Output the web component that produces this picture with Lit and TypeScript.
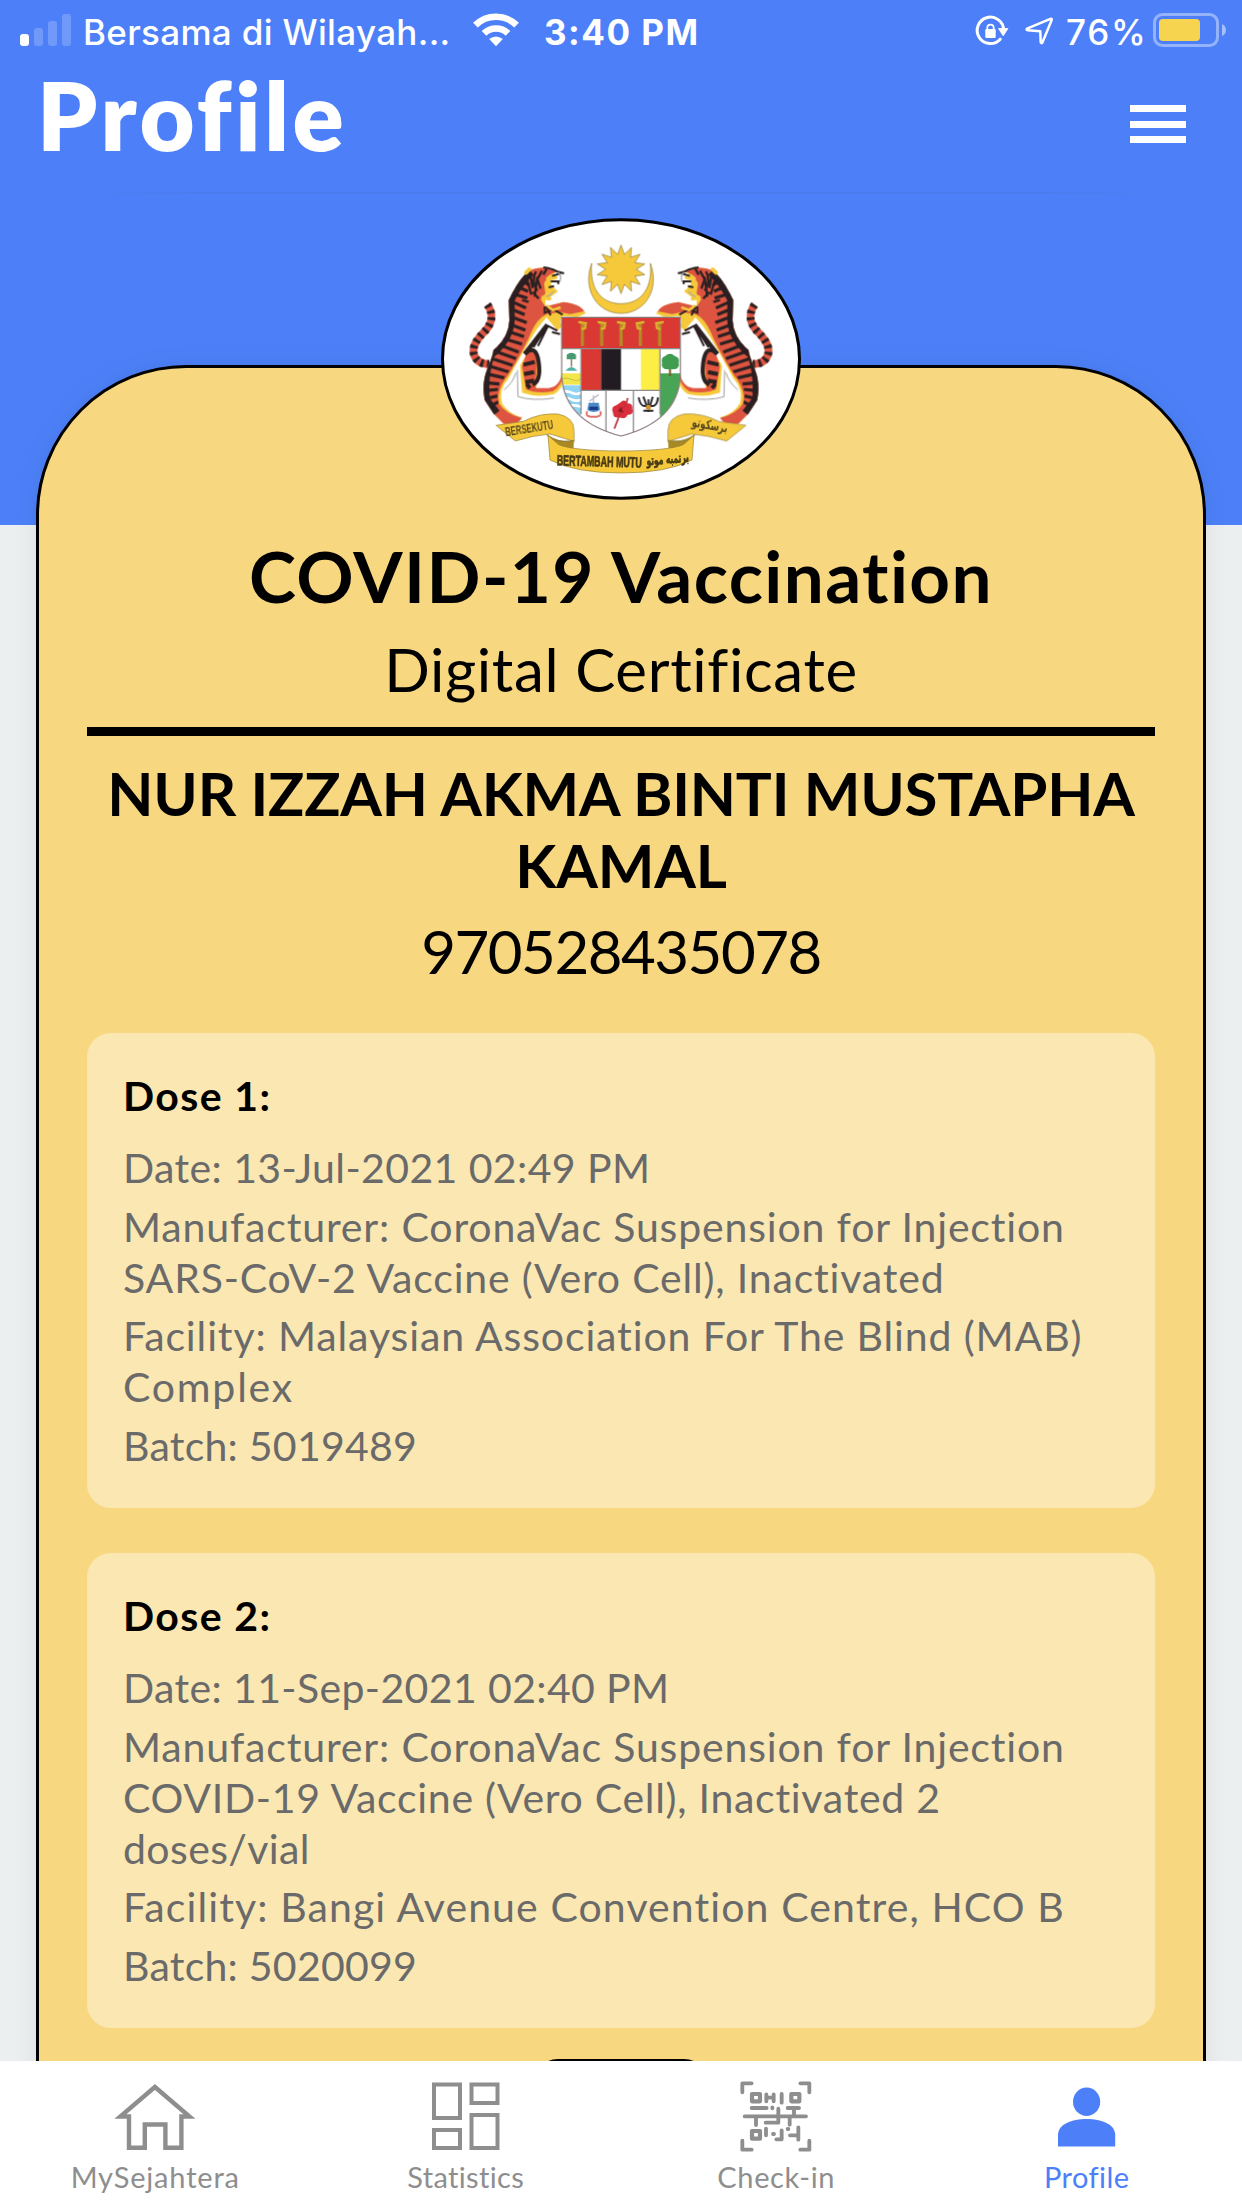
import { LitElement, html, svg, css } from "lit";
import { customElement, property } from "lit/decorators.js";
import { styleMap } from "lit/directives/style-map.js";

interface Line {
  text: string;
  /** Letter tracking in px. */
  track: number;
}

interface Dose {
  title: string;
  entries: Line[][];
}

const DOSES: Dose[] = [
  {
    title: "Dose 1:",
    entries: [
      [{ text: "Date: 13-Jul-2021 02:49 PM", track: 0.4 }],
      [
        { text: "Manufacturer: CoronaVac Suspension for Injection", track: 0.84 },
        { text: "SARS-CoV-2 Vaccine (Vero Cell), Inactivated", track: 0.83 },
      ],
      [
        { text: "Facility: Malaysian Association For The Blind (MAB)", track: 0.88 },
        { text: "Complex", track: 1.8 },
      ],
      [{ text: "Batch: 5019489", track: 0.25 }],
    ],
  },
  {
    title: "Dose 2:",
    entries: [
      [{ text: "Date: 11-Sep-2021 02:40 PM", track: 0.38 }],
      [
        { text: "Manufacturer: CoronaVac Suspension for Injection", track: 0.84 },
        { text: "COVID-19 Vaccine (Vero Cell), Inactivated 2", track: 0.72 },
        { text: "doses/vial", track: 0.4 },
      ],
      [{ text: "Facility: Bangi Avenue Convention Centre, HCO B", track: 1.1 }],
      [{ text: "Batch: 5020099", track: 0.25 }],
    ],
  },
];

@customElement("status-bar")
class StatusBar extends LitElement {
  static styles = css`
    :host { display: flex; height: 60px; color: #fff; font: 500 35px/60px Inter, "Liberation Sans", sans-serif; white-space: pre; }
    svg { display: block; flex: none; }
    .label { padding-top: 1.5px; }
    .carrier { width: 380px; letter-spacing: 0.33px; }
    .time { padding-left: 15px; font-weight: 700; letter-spacing: 1.5px; }
    .right { display: flex; margin-left: auto; }
    .percent { width: 82px; letter-spacing: 1.7px; }
  `;
  render() {
    return html`
      <svg width="83" height="60" fill="#fff">
        <rect x="20" y="34" width="9" height="12" rx="3" />
        <g fill-opacity=".2">
          <rect x="34" y="28" width="9" height="18" rx="3" />
          <rect x="48" y="21" width="9" height="25" rx="3" />
          <rect x="62" y="14" width="9" height="32" rx="3" />
        </g>
      </svg>
      <span class="label carrier">Bersama di Wilayah...</span>
      <svg width="66" height="60" viewBox="463 0 66 60" fill="none" stroke="#fff" stroke-width="6.6">
        <path d="M475.4 25.2a29.5 29.5 0 0 1 41.2 0" />
        <path d="M484 33.4a17.3 17.3 0 0 1 24 0" />
        <path d="M496 46.3l-6.8-7.2q6.8-5.4 13.6 0z" fill="#fff" stroke="none" />
      </svg>
      <span class="label time">3:40 PM</span>
      <div class="right">
        <svg width="96" height="60" viewBox="970 0 96 60" fill="none" stroke="#fff">
          <path d="M1003.6 30a13.2 13.2 0 1 0-3.4 9.2" stroke-width="3" stroke-linecap="round" />
          <path d="M998.6 28.6h9.2l-4.6 7.2z" fill="#fff" stroke-width="1" stroke-linejoin="round" />
          <rect x="985.3" y="29" width="10.4" height="9" rx="1.3" fill="#fff" stroke="none" />
          <path d="M987.3 30v-2.2a3.2 3.2 0 0 1 6.4 0v2.2" stroke-width="1.7" />
          <path d="M1027 28.6L1050.4 18.8q1.8-.5 1.2 1.4L1042.4 42.4q-1.2 1.6-1.7-.3L1040.3 31.2L1027.6 30.3q-1.7-.7-.6-1.7z" stroke-width="2.5" stroke-linejoin="round" />
        </svg>
        <span class="label percent">76%</span>
        <svg width="94" height="60" viewBox="1148 0 94 60">
          <rect x="1154.5" y="14.5" width="63" height="31" rx="8" fill="none" stroke="#fff" stroke-opacity=".4" stroke-width="3" />
          <rect x="1159" y="19" width="41" height="22" rx="4" fill="#f7d44f" />
          <path d="M1222 24q4 2 4 6t-4 6z" fill="#fff" fill-opacity=".5" />
        </svg>
      </div>
    `;
  }
}

@customElement("national-emblem")
class NationalEmblem extends LitElement {
  static styles = css`
    :host { display: block; }
    svg { display: block; width: 360px; height: 282px; }
    .motto { font: 700 44px "Liberation Sans", sans-serif; }
    .jawi { font: 700 40px "DejaVu Sans", sans-serif; }
  `;

  private tiger() {
    return svg`
      <path d="M172 284C192 312 186 342 164 364C136 392 126 412 132 434C140 456 156 462 178 462" fill="none" stroke="#dd5540" stroke-width="23" />
      <path d="M172 284C192 312 186 342 164 364C136 392 126 412 132 434C140 456 156 462 178 462" fill="none" stroke="#2b2021" stroke-width="24" stroke-dasharray="9 11" />
      <path d="M398 488Q392 534 360 538L318 540C322 516 330 466 318 432L302 414L270 466L276 548Q320 564 372 552Q398 540 404 500Z" fill="#f6c93b" />
      <path d="M398 484Q390 530 356 534L318 534C308 520 332 470 314 430L292 420L276 470L288 538Q320 552 368 544Q394 530 400 494Z" fill="#e2563f" />
      <path d="M284 432Q318 400 326 456T308 524M280 464l34-8M282 492l30-6M286 516l26-4M300 534l-10-12" fill="none" stroke="#2b2021" stroke-width="12" />
      <path d="M262 480L264 560Q310 574 372 564M258 488Q250 516 222 540" fill="none" stroke="#8a8a8a" stroke-width="2.5" />
      <path d="M300 180Q340 164 384 182L362 200L364 226L384 244L360 262L346 268L346 290L400 276Q452 282 468 310L440 322L398 318Q386 330 396 350L382 362L350 322Q326 346 300 390T236 504Q204 540 216 580Q236 612 276 622L262 640L222 642L190 610L164 570Q154 520 172 476T190 420Q236 382 238 330L236 270Q270 200 300 180Z" fill="#f6c93b" />
      <path d="M300 180Q340 164 384 182L356 196L342 220L346 250L332 268L346 290L400 276Q452 282 462 304L420 312L390 306L350 312Q320 326 302 370T234 496Q196 542 208 582Q228 612 276 624L262 640L222 642L190 610L164 570Q154 520 172 476T190 420Q236 382 238 330L236 270Q270 200 300 180Z" fill="#dd5540" />
      <g clip-path="url(#tiger-body)" fill="none" stroke="#2b2021">
        <path d="M300 182Q262 218 238 268V334Q234 386 178 432Q156 500 164 572L196 612" stroke-width="32" />
        <path d="M268 206l30 20M254 226l40 18M246 250l46 14M240 272l48 22M240 296l44 18M238 318l52 20M232 340l54 20M226 362l56 18M216 384l60 18M206 404l60 22M196 424l62 22M186 446l62 20M178 468l60 18M172 492l52 12M166 518l42 4M166 542l38-4M168 566l34-8M178 590l30-16" stroke-width="9.5" />
        <path d="M300 190l8 44M318 184q-16 30 4 58M336 182l-14 26l10 28M350 176l-10 18M308 246l18 20M276 270l20 6M322 200l-8 60M290 204l14 50" stroke-width="7" />
      </g>
      <path d="M298 178l-10 10M354 206l22-4M340 262l18 4" stroke="#f6c93b" stroke-width="12" stroke-linecap="round" />
      <path d="M340 172q24 2 40 12l22 6M366 198l26-8M362 214h24l-2 8M372 228l-16 4M344 290v18l26-10l28 16M362 316l-14-28M382 362l-28-14l-30 60M390 372l-24-6M350 350l-40 62" fill="none" stroke="#2b2021" stroke-width="6" />
      <path d="M352 344L284 432" stroke="#2b2021" stroke-width="13" />
      <path d="M384 186q12 10 6 28M370 244q-8 12-20 16" fill="none" stroke="#aaa" stroke-width="4" />
      <path d="M356 326l34 20M350 286l18 14l24-8" fill="none" stroke="#f6c93b" stroke-width="8" />
    `;
  }

  private ribbonSide() {
    return svg`
      <path d="M352 674Q400 702 432 690L430 720L386 712Z" fill="#a98a22" />
      <path d="M198 646L280 634Q330 608 384 612Q432 622 432 662V694L360 672Q310 676 256 693Z" fill="#f6c93b" stroke="#94803a" stroke-width="2" />
      <path d="M352 674Q364 700 432 692" fill="none" stroke="#94803a" stroke-width="4" />
    `;
  }

  render() {
    const rays = Array.from({ length: 14 }, (_, i) => {
      const point = (radius: number, step: number) => {
        const angle = ((i + step) / 14) * Math.PI * 2 - Math.PI / 2;
        return `${(573 + radius * Math.cos(angle)).toFixed(1)} ${(178 + radius * Math.sin(angle)).toFixed(1)}`;
      };
      return `${point(73, 0)} ${point(46, 0.5)}`;
    }).join(" ");
    return html`
      <svg viewBox="441 218 360 282">
        <defs>
          <filter id="soften" x="-5%" y="-5%" width="110%" height="110%"><feGaussianBlur stdDeviation="2.2" /></filter>
          <clipPath id="tiger-body">
            <path d="M300 180Q340 164 384 182L356 196L340 220L344 250L330 268L330 312Q316 320 298 370T230 494Q192 540 206 582L220 642L190 610L164 570Q154 520 172 476T190 420Q236 382 238 330L236 270Q270 200 300 180Z" />
          </clipPath>
          <clipPath id="shield">
            <path d="M395 322H751V500Q742 634 573 678Q404 634 395 500Z" />
          </clipPath>
        </defs>
        <ellipse cx="621" cy="359" rx="178.5" ry="139.3" fill="#fff" stroke="#000" stroke-width="3" />
        <g transform="translate(430 210) scale(.33333)" filter="url(#soften)">
          <g>${this.tiger()}</g>
          <g transform="translate(1146 0) scale(-1 1)">${this.tiger()}</g>
          <path d="M485 160C456 236 500 310 573 310C646 310 690 236 661 160C668 232 636 281 573 281C510 281 478 232 485 160Z" fill="#f6c93b" stroke="#a08b45" stroke-width="2.5" />
          <polygon points=${rays} fill="#f6c93b" stroke="#a08b45" stroke-width="2.5" />
          <g clip-path="url(#shield)">
            <rect x="395" y="322" width="356" height="360" fill="#fff" />
            <rect x="395" y="322" width="356" height="94" fill="#da3732" />
            <rect x="453" y="416" width="60" height="124" fill="#da3732" />
            <rect x="513" y="416" width="60" height="124" fill="#231f20" />
            <rect x="633" y="416" width="57" height="124" fill="#fcee44" />
            <rect x="395" y="490" width="58" height="34" fill="#f3e64c" />
            <path d="M395 508q15-8 29 0t29 0" fill="none" stroke="#c6c44a" stroke-width="3" />
            <rect x="395" y="526" width="58" height="90" fill="#8fd3f3" />
            <path d="M395 548q15-8 29 0t29 0M395 568q15-8 29 0t29 0M410 590q15-8 43 0" fill="none" stroke="#fff" stroke-width="8" />
            <rect x="690" y="490" width="62" height="150" fill="#48a556" />
            <path d="M453 416V612M528 540V670M610 540V670M690 416V612M453 541H690M395 416H751" fill="none" stroke="#8d8d8d" stroke-width="4" />
          </g>
          <path d="M395 322H751V500Q742 634 573 678Q404 634 395 500Z" fill="none" stroke="#8a7777" stroke-width="3.5" />
          <path d="M457 342V408M515 342V408M573 342V408M631 342V408M689 342V408" stroke="#b58a25" stroke-width="10" />
          <path d="M445 336l22 4l-2 14l-10 4M503 336l22 4l-2 14l-10 4M561 336l22 4l-2 14l-10 4M643 336l-22 4l2 14l10 4M701 336l-22 4l2 14l10 4" fill="none" stroke="#d9ad2e" stroke-width="8" />
          <path d="M424 440V470" stroke="#8a6a4a" stroke-width="4" />
          <path d="M410 434q14-12 28 0v14h-28z" fill="#4a9a72" />
          <path d="M406 482q18-22 36 0z" fill="#4fb3a5" />
          <path d="M720 454V498" stroke="#7a5a2c" stroke-width="6" />
          <path d="M706 438q14-14 28 0q16 4 12 20q4 18-14 20h-24q-16-4-12-20q-4-16 10-20z" fill="#3f9d50" />
          <path d="M490 556v26M478 574l28-20" stroke="#b9bcc8" stroke-width="4" />
          <path d="M476 578h30l4 22q-18 12-38 0z" fill="#4c88c8" />
          <rect x="478" y="590" width="26" height="10" fill="#1d3b86" />
          <path d="M472 604q-8 14 10 16h18q18-4 10-16" fill="none" stroke="#e0726a" stroke-width="6" />
          <path d="M573 576q12-10 18 4q18 0 16 16q6 18-14 18q-8 16-24 8q-20 4-20-14q-8-18 10-22z" fill="#d92f3a" />
          <path d="M573 604q-8 20-20 52M573 594q14 2 20-30" fill="none" stroke="#c2303a" stroke-width="5" />
          <path d="M573 590l-10 14l18 4z" fill="#8d1922" />
          <path d="M626 562q4 24 16 26h28q12-4 14-26M640 560l10 28M668 560l-8 28M655 568v38M640 602h30" fill="none" stroke="#2f2d30" stroke-width="6" />
          <circle cx="655" cy="592" r="8" fill="#cf9133" />
          <g>${this.ribbonSide()}</g>
          <g transform="translate(1146 0) scale(-1 1)">${this.ribbonSide()}</g>
          <path d="M354 676L386 704Q430 722 573 723Q716 722 760 704L792 676L786 750Q710 789 573 789Q436 789 360 750Z" fill="#f6c93b" stroke="#94803a" stroke-width="2" />
          <text class="motto" transform="translate(228 680) rotate(-9) scale(1 .9)" textLength="145" lengthAdjust="spacingAndGlyphs" fill="#57471a">BERSEKUTU</text>
          <text class="motto" transform="translate(380 766) rotate(1.5)" textLength="255" lengthAdjust="spacingAndGlyphs" fill="#4a3c14" stroke="#4a3c14" stroke-width="2">BERTAMBAH MUTU</text>
          <text class="jawi" transform="translate(650 766) rotate(-5)" textLength="128" lengthAdjust="spacingAndGlyphs" fill="#4a3c14" stroke="#4a3c14" stroke-width="2">برتمبه موتو</text>
          <text class="jawi" transform="translate(784 650) rotate(10)" textLength="108" lengthAdjust="spacingAndGlyphs" fill="#57471a">برسکوتو</text>
        </g>
      </svg>
    `;
  }
}

@customElement("dose-card")
class DoseCard extends LitElement {
  @property({ attribute: false }) dose!: Dose;
  static styles = css`
    :host { display: flex; flex-direction: column; gap: 7.5px; box-sizing: border-box; padding: 36.5px 36px 37.5px; border-radius: 24px; background: #fae7b1; color: #6a6a6a; font: 400 41px/51px Lato, "Open Sans", sans-serif; white-space: nowrap; }
    .title { margin-bottom: 14px; color: #000; font-weight: 700; letter-spacing: 1.4px; }
  `;
  render() {
    return html`
      <div class="title">${this.dose.title}</div>
      ${this.dose.entries.map(
        (lines) => html`<div>${lines.map((line) => html`<div style=${styleMap({ letterSpacing: `${line.track}px` })}>${line.text}</div>`)}</div>`,
      )}
    `;
  }
}

@customElement("tab-bar")
class TabBar extends LitElement {
  static styles = css`
    :host { display: grid; grid-template-columns: repeat(4, 1fr); height: 147px; background: #fff; color: #8e8e8e; font: 400 29px/36px Lato, "Open Sans", sans-serif; }
    .tab { display: flex; flex-direction: column; align-items: center; padding-top: 14px; }
    .active { color: #4d80f8; }
    svg { display: block; width: 84px; height: 84px; margin-bottom: -0.5px; }
    .home { letter-spacing: 0.83px; }
    .stats { letter-spacing: 0.35px; }
    .check { letter-spacing: 0.65px; }
    .profile { letter-spacing: 0.45px; }
  `;
  render() {
    return html`
      <div class="tab">
        <svg viewBox="0 0 84 84" fill="none" stroke="currentColor" stroke-width="4.4">
          <path d="M16 41.5H7.3L41.9 12L76.5 41.5H68.4M16 39.3V72.8H31.8V49.5H52.4V72.8H68.4V39.3" />
        </svg>
        <span class="home">MySejahtera</span>
      </div>
      <div class="tab">
        <svg viewBox="0 0 84 84" fill="none" stroke="currentColor" stroke-width="4">
          <rect x="10" y="9.5" width="26" height="33.5" />
          <rect x="47.5" y="9.5" width="26" height="18.5" />
          <rect x="10" y="55" width="26" height="18" />
          <rect x="47.5" y="40" width="26" height="33" />
        </svg>
        <span class="stats">Statistics</span>
      </div>
      <div class="tab">
        <svg viewBox="0 0 252 252" fill="none" stroke="currentColor" stroke-width="11.5" stroke-linecap="round" stroke-linejoin="round">
          <path d="M25 52V25H53M199 25H226V52M25 197V224H53M199 224H226V197" />
          <path d="M54 57H78V79H54ZM172 57H196V79H172ZM54 168H78V191H54Z" stroke-width="12.5" />
          <path d="M97 58V79M97 68H119M119 58V79M143 57V83M53 99H98M115 97V100M161 99H195M180 99V120M32 124H216M66 124V150M133 101V143H95M167 124V149M96 161V181M117 177H120M143 166V193H127M161 162H163M193 157V194M168 181H193" />
        </svg>
        <span class="check">Check-in</span>
      </div>
      <div class="tab active">
        <svg viewBox="0 0 84 84" fill="currentColor">
          <ellipse cx="41.6" cy="26.8" rx="13.6" ry="14.2" />
          <path d="M13 71.6V60C13 49 27 44 41.6 44S70.2 49 70.2 60V71.6Z" />
        </svg>
        <span class="profile">Profile</span>
      </div>
    `;
  }
}

@customElement("app-root")
class AppRoot extends LitElement {
  static styles = css`
    :host { display: flex; flex-direction: column; width: 1242px; height: 2208px; overflow: hidden; background: linear-gradient(#4d80f8 525px, #ebeff0 525px); font-family: Lato, "Open Sans", sans-serif; color: #000; }
    status-bar, tab-bar { flex: none; }
    .header { display: flex; flex: none; justify-content: space-between; box-sizing: border-box; height: 132px; padding: 0 56px 0 37px; }
    .heading { margin: -3px 0 0; color: #fff; font-size: 95px; line-height: 114px; font-weight: 800; letter-spacing: 3.6px; }
    .menu { display: flex; flex-direction: column; gap: 8.7px; margin-top: 45px; }
    .bar { width: 56px; height: 7px; background: #fff; }
    .content { flex: 1; min-height: 0; overflow: hidden; padding: 173px 36px 0; background: linear-gradient(90deg, transparent 60px, rgba(70, 90, 170, 0.12) 200px, rgba(70, 90, 170, 0.12) 1042px, transparent 1182px) no-repeat 0 0 / 100% 2px; }
    .card { display: flex; flex-direction: column; box-sizing: border-box; height: 1900px; padding: 0 48px; border: 3px solid #000; border-radius: 150px; background: #f8d781; box-shadow: 0 0 24px rgba(0, 0, 0, 0.07); text-align: center; white-space: nowrap; }
    .emblem { align-self: center; margin-top: -150px; }
    .title { margin-top: 31px; font-size: 71px; line-height: 90px; font-weight: 700; letter-spacing: 1.4px; }
    .subtitle { margin-top: 12px; font-size: 60px; line-height: 73px; letter-spacing: 0.64px; }
    .rule { height: 9px; margin-top: 21px; background: #000; }
    .name { margin-top: 20.5px; font-size: 60px; line-height: 72px; font-weight: 700; letter-spacing: -0.2px; }
    .id { margin-top: 14px; font-size: 60px; line-height: 72px; letter-spacing: -1.5px; }
    .doses { display: flex; flex-direction: column; gap: 45px; margin-top: 46.5px; text-align: left; }
    .next { align-self: center; box-sizing: border-box; flex: none; width: 174px; height: 174px; margin-top: 31px; border: 3px solid #000; border-radius: 24px; }
  `;
  render() {
    return html`
      <status-bar></status-bar>
      <header class="header">
        <h1 class="heading">Profile</h1>
        <div class="menu"><div class="bar"></div><div class="bar"></div><div class="bar"></div></div>
      </header>
      <main class="content">
        <section class="card">
          <national-emblem class="emblem"></national-emblem>
          <div class="title">COVID-19 Vaccination</div>
          <div class="subtitle">Digital Certificate</div>
          <div class="rule"></div>
          <div class="name">NUR IZZAH AKMA BINTI MUSTAPHA<br />KAMAL</div>
          <div class="id">970528435078</div>
          <div class="doses">${DOSES.map((dose) => html`<dose-card .dose=${dose}></dose-card>`)}</div>
          <div class="next"></div>
        </section>
      </main>
      <tab-bar></tab-bar>
    `;
  }
}
